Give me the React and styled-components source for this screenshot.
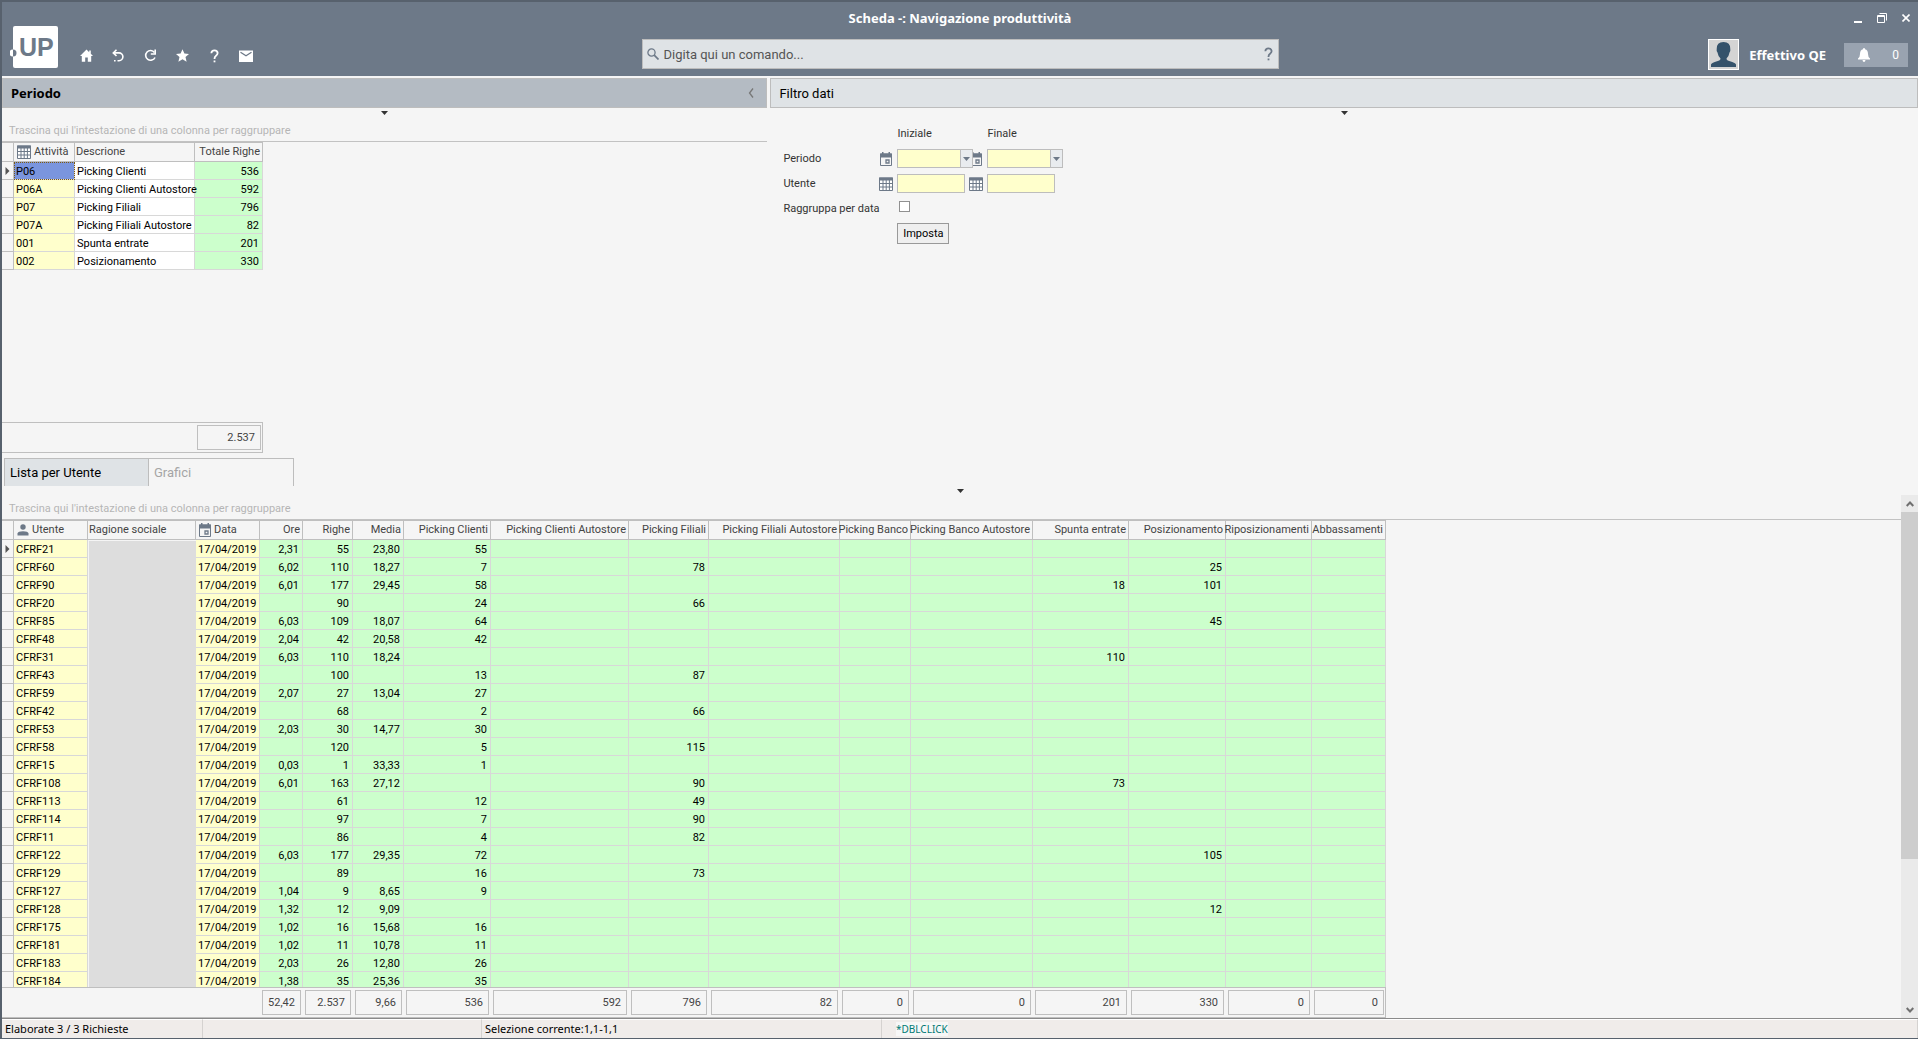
import React, { useState } from "react";
import styled, { createGlobalStyle, css } from "styled-components";

const GlobalStyle = createGlobalStyle`
  * { box-sizing: border-box; }
  body {
    margin: 0;
    background: #f5f5f5;
    color: #333;
    font-family: Roboto, sans-serif;
    font-size: 11px;
  }
  button, input {
    font: inherit;
    color: inherit;
    margin: 0;
    padding: 0;
    border: 0;
    border-radius: 0;
    background: none;
  }
`;

const Window = styled.div`
  display: flex;
  flex-direction: column;
  height: 100vh;
  border-top: 2px solid #57616d;
  border-left: 2px solid #57616d;
  border-bottom: 1px solid #57616d;
  overflow: hidden;
`;

/* Cabeçalho */
const Header = styled.header`
  display: grid;
  grid-template-columns: 1fr minmax(300px, 637px) 1fr;
  flex: none;
  height: 74px;
  background: #6d7988;
  color: #fff;
`;
const HeaderLeft = styled.div`
  display: flex;
  align-items: flex-end;
  padding: 0 0 8px 8px;
`;
const Logo = styled.svg`
  display: block;
  width: 48px;
  height: 42px;
  margin-right: 12px;
`;
const Toolbar = styled.nav`
  display: flex;
`;
const ToolButton = styled.button`
  display: flex;
  align-items: center;
  justify-content: center;
  width: 32px;
  height: 25px;
`;
const HeaderCenter = styled.div`
  display: flex;
  flex-direction: column;
`;
const Title = styled.h1`
  margin: 0;
  height: 37px;
  line-height: 33px;
  font-family: "Noto Sans", sans-serif;
  font-size: 13px;
  text-align: center;
`;
const Search = styled.label`
  display: flex;
  align-items: center;
  height: 30px;
  padding: 0 5px 0 4px;
  gap: 5px;
  background: #dfe3e6;
  border: 1px solid #bdbdbd;
  color: #6d7988;
`;
const SearchInput = styled.input`
  flex: 1;
  min-width: 0;
  height: 26px;
  font-size: 13px;
  outline: 0;
  &::placeholder { color: #555; opacity: 1; }
`;
const HeaderRight = styled.div`
  display: flex;
  flex-direction: column;
  align-items: flex-end;
`;
const WindowButtons = styled.div`
  display: flex;
  height: 37px;
  padding: 8px 0 0;
`;
const WindowButton = styled.button`
  display: flex;
  align-items: center;
  justify-content: center;
  width: 24px;
  height: 16px;
`;
const UserArea = styled.div`
  display: flex;
  align-items: center;
  height: 31px;
  padding-right: 10px;
`;
const UserName = styled.span`
  margin: 0 18px 0 10px;
  font-family: "Noto Sans", sans-serif;
  font-size: 13px;
  font-weight: bold;
`;
const Bell = styled.button`
  display: flex;
  align-items: center;
  justify-content: space-between;
  width: 64px;
  height: 24px;
  padding: 0 9px 0 14px;
  background: #99a3b0;
  font-size: 12px;
`;

/* Painéis superiores */
const Upper = styled.div`
  display: grid;
  grid-template-columns: calc(40% - 1px) 1fr;
  column-gap: 3px;
  flex: none;
  padding-top: 2px;
`;
const Panel = styled.section`
  display: flex;
  flex-direction: column;
  min-width: 0;
`;
const PanelHeader = styled.h2`
  display: flex;
  align-items: center;
  justify-content: space-between;
  margin: 0;
  height: 30px;
  padding: 0 10px 0 8px;
  border: 1px solid #bdbdbd;
  background: ${({ $active }) => ($active ? "#b4bbc3" : "#dfe3e6")};
  color: #000;
  font-family: ${({ $active }) => ($active ? '"Noto Sans"' : "Roboto")}, sans-serif;
  font-size: 13px;
  font-weight: ${({ $active }) => ($active ? "bold" : "normal")};
`;
const PanelButton = styled.button`
  display: flex;
  color: #777;
`;
const Splitter = styled.div`
  display: flex;
  justify-content: center;
  align-items: center;
  flex: none;
  height: 9px;
`;
const GroupHint = styled.div`
  flex: none;
  height: 25px;
  padding: 3px 0 0 7px;
  line-height: 21px;
  border-bottom: 1px solid #c2c2c2;
  color: #b5b5b5;
`;

/* Grades */
const GridBody = styled.div`
  flex: ${({ $fill }) => ($fill ? "1" : "none")};
  min-height: 0;
  height: ${({ $fill }) => ($fill ? "auto" : "280px")};
  overflow: hidden;
`;
const Table = styled.table`
  table-layout: fixed;
  width: 0;
  border-spacing: 0;
`;
const Col = styled.col`
  width: ${({ $w }) => $w}px;
`;
const Th = styled.th`
  height: 20px;
  padding: 0 2px 0 1px;
  border: solid #bfbfbf;
  border-width: 1px 1px 1px 0;
  font-weight: normal;
  line-height: 16px;
  text-align: ${({ $right }) => ($right ? "right" : "left")};
  white-space: nowrap;
  color: #444;
`;
const ThLabel = styled.span`
  display: flex;
  align-items: center;
  justify-content: ${({ $right }) => ($right ? "flex-end" : "flex-start")};
  gap: 3px;
  padding-left: ${({ $icon }) => ($icon ? "2px" : "0")};
`;
const fills = {
  key: "#ffffcc",
  text: "#ffffff",
  num: "#ccffcc",
  mark: "#f5f5f5",
};
const Td = styled.td`
  height: 18px;
  padding: 3px 3px 0 2px;
  border: solid #d8d8d8;
  border-width: 0 1px 1px 0;
  background: ${({ $fill }) => fills[$fill]};
  color: #000;
  line-height: 14px;
  text-align: ${({ $fill }) => ($fill === "num" ? "right" : "left")};
  white-space: nowrap;
  ${({ $fill }) => $fill === "mark" && css`
    padding: 0 0 0 3px;
    border-color: #bfbfbf;
    line-height: 0;
  `}
  ${({ $selected }) => $selected && css`
    background: #7a95de;
    outline: 1px dotted #7d5a10;
    outline-offset: -1px;
  `}
`;
const Masked = styled.td`
  padding: 0;
  border-left: 1px solid #f5f5f5;
  border-top: 1px solid #f5f5f5;
  background: #dddddd;
`;
const Footer = styled.div`
  flex: none;
  display: flex;
  width: ${({ $w }) => $w}px;
  height: 31px;
  border: solid #bfbfbf;
  border-width: 1px 1px 1px 0;
`;
const FootCell = styled.div`
  flex: 0 0 ${({ $w }) => $w}px;
  padding: 2px;
`;
const Total = styled.output`
  display: block;
  height: 25px;
  padding-right: 5px;
  border: 1px solid #bfbfbf;
  line-height: 24px;
  text-align: right;
  color: #444;
`;

/* Filtros */
const Filters = styled.form`
  display: grid;
  grid-template-columns: 96px 18px 68px 22px 76px;
  grid-auto-rows: 25px;
  align-items: center;
  padding: 4px 0 0 13px;
  line-height: 15px;
  white-space: nowrap;
`;
const FieldIcon = styled.span`
  display: flex;
  justify-content: center;
  justify-self: end;
  width: 14px;
  margin-right: 4px;
`;
const Combo = styled.div`
  position: relative;
  z-index: 1;
  display: flex;
  width: 76px;
  height: 19px;
  border: 1px solid #bdbdbd;
`;
const ComboInput = styled.input`
  flex: 1;
  min-width: 0;
  padding: 0 2px;
  background: #ffffcc;
`;
const ComboButton = styled.button`
  display: flex;
  align-items: center;
  justify-content: center;
  width: 12px;
  border-left: 1px solid #bdbdbd;
  background: #e9ecef;
`;
const TextInput = styled.input`
  width: 68px;
  height: 19px;
  padding: 0 2px;
  border: 1px solid #bdbdbd;
  background: #ffffcc;
`;
const CheckBox = styled.input`
  appearance: none;
  width: 11px;
  height: 11px;
  margin: 0 0 4px 2px;
  border: 1px solid #909090;
  background: #fff;
  &:checked { background: #6d7988; }
`;
const SubmitButton = styled.button`
  width: 52px;
  height: 21px;
  border: 1px solid #999;
  background: #efefef;
  color: #000;
`;

/* Abas e parte inferior */
const Tabs = styled.div`
  display: flex;
  flex: none;
  margin: 5px 0 0 2px;
  height: 28px;
`;
const Tab = styled.button`
  width: 145px;
  padding-left: 5px;
  border: solid #bdbdbd;
  border-width: 1px 1px 0 ${({ $active }) => ($active ? "1px" : "0")};
  background: ${({ $active }) => ($active ? "#dfe3e6" : "transparent")};
  color: ${({ $active }) => ($active ? "#000" : "#a5a5a5")};
  font-size: 13px;
  text-align: left;
`;
const Lower = styled.div`
  display: flex;
  flex: 1;
  min-height: 0;
`;
const LowerGrid = styled.div`
  display: flex;
  flex-direction: column;
  flex: 1;
  min-width: 0;
`;
const ScrollBar = styled.div`
  display: flex;
  flex-direction: column;
  width: 17px;
  background: #eaeaea;
`;
const ScrollButton = styled.button`
  display: flex;
  align-items: center;
  justify-content: center;
  flex: none;
  height: 17px;
`;
const ScrollTrack = styled.div`
  flex: 1;
`;
const ScrollThumb = styled.div`
  height: 71%;
  background: #cdcdcd;
`;
const StatusBar = styled.footer`
  display: grid;
  grid-template-columns: 201px 279px 400px 1fr;
  flex: none;
  height: 20px;
  border-top: 1px solid #8a8a8a;
  background: #f0ecea;
  color: #000;
  font-family: "Noto Sans", sans-serif;
`;
const StatusItem = styled.span`
  padding-left: ${({ $event }) => ($event ? "14px" : "3px")};
  border-right: 1px solid #d5d2d0;
  border-top: 1px solid #fff;
  line-height: 17px;
  white-space: nowrap;
`;
const EventText = styled.span`
  background: #f7f7f7;
  color: #007a74;
  font-size: 10px;
`;

/* Ícones */
const ArrowDown = () => (
  <svg width="7" height="4" viewBox="0 0 7 4"><path d="M0 0h7L3.5 4z" fill="#333" /></svg>
);
const RowMarker = () => (
  <svg width="5" height="8" viewBox="0 0 5 8"><path d="M0.500 0L4.500 4L0.500 8z" fill="#555" /></svg>
);
const GridIcon = () => (
  <svg width="14" height="14" viewBox="0 0 14 14">
    <path d="M0.500 1h13v12.500H0.500z" fill="#fff" stroke="#6d7988" />
    <path d="M0 0.500h14v3H0z" fill="#6d7988" />
    <path d="M0 6.500h14M0 10h14M4 3v11M7.200 3v11M10.400 3v11" stroke="#6d7988" />
  </svg>
);
const CalendarIcon = () => (
  <svg width="12" height="14" viewBox="0 0 12 14">
    <path d="M0.500 2h11v11.500H0.500z" fill="#f5f5f5" stroke="#6d7988" />
    <path d="M0 1.500h12v4H0zM2 0h1.500v2H2zM8.500 0H10v2H8.500z" fill="#6d7988" />
    <path d="M6 8h3v3H6z" fill="none" stroke="#6d7988" strokeWidth="1.300" />
  </svg>
);
const UserIcon = () => (
  <svg width="12" height="12" viewBox="0 0 12 12" fill="#6d7988">
    <circle cx="6" cy="3" r="2.700" />
    <path d="M0.500 11.500V9.500Q1 7.200 6 7.200T11.500 9.500v2z" />
  </svg>
);
const Question = ({ size = 15 }) => (
  <svg width={size - 5} height={size} viewBox="0 0 10 15" fill="none" stroke="currentColor" strokeWidth="2">
    <path d="M1.500 4.500Q1.700 1.300 5 1.300T8.500 4.300Q8.500 5.900 6.700 7.100T5 10.800" />
    <path d="M5 12.500v2" />
  </svg>
);

const tools = [
  ["Home", <svg width="13" height="13" viewBox="0 0 13 13" fill="#fff"><path d="M6.500 0.500L0 7h1.800v5.800h3.400V8.500h2.600v4.300h3.400V7H13L10.800 4.800V1.500H9.200v1.700z" /></svg>],
  ["Indietro", <svg width="12" height="13" viewBox="0 0 12 13" fill="none" stroke="#fff" strokeWidth="1.600"><path d="M4.500 0.800L1.300 3.900L4.500 7M1.500 3.900H7a3.800 3.800 0 0 1 0 7.800H5.500" /><path d="M2 11.700h1.600" /></svg>],
  ["Aggiorna", <svg width="13" height="13" viewBox="0 0 13 13" fill="none" stroke="#fff" strokeWidth="1.600"><path d="M10.500 3.400A4.900 4.900 0 1 0 11 8.500" /><path d="M11.200 0.500V5H6.800" /></svg>],
  ["Preferiti", <svg width="13" height="13" viewBox="0 0 13 13" fill="#fff"><path d="M6.500 0.300L8.400 4.600L13 5L9.500 8.100L10.600 12.700L6.500 10.200L2.400 12.700L3.500 8.100L0 5L4.600 4.600z" /></svg>],
  ["Aiuto", <Question size={14} />],
  ["Messaggi", <svg width="14" height="12" viewBox="0 0 14 12"><path d="M0 0.500h14v11.500H0z" fill="#fff" /><path d="M1.500 2.200L7 5.800L12.500 2.200" fill="none" stroke="#6d7988" strokeWidth="1.300" /></svg>],
];

const activityCols = [
  { label: "", w: 12, fill: "mark" },
  { label: "Attività", w: 61, fill: "key", icon: <GridIcon /> },
  { label: "Descrione", w: 120, fill: "text" },
  { label: "Totale Righe", w: 68, fill: "num" },
];
const activities = [
  ["P06", "Picking Clienti", "536"],
  ["P06A", "Picking Clienti Autostore", "592"],
  ["P07", "Picking Filiali", "796"],
  ["P07A", "Picking Filiali Autostore", "82"],
  ["001", "Spunta entrate", "201"],
  ["002", "Posizionamento", "330"],
];

const userCols = [
  { label: "", w: 12, fill: "mark" },
  { label: "Utente", w: 74, fill: "key", icon: <UserIcon /> },
  { label: "Ragione sociale", w: 108, fill: "masked" },
  { label: "Data", w: 64, fill: "key", icon: <CalendarIcon /> },
  { label: "Ore", w: 43, fill: "num", total: "52,42" },
  { label: "Righe", w: 50, fill: "num", total: "2.537" },
  { label: "Media", w: 51, fill: "num", total: "9,66" },
  { label: "Picking Clienti", w: 87, fill: "num", total: "536" },
  { label: "Picking Clienti Autostore", w: 138, fill: "num", total: "592" },
  { label: "Picking Filiali", w: 80, fill: "num", total: "796" },
  { label: "Picking Filiali Autostore", w: 131, fill: "num", total: "82" },
  { label: "Picking Banco", w: 71, fill: "num", total: "0" },
  { label: "Picking Banco Autostore", w: 122, fill: "num", total: "0" },
  { label: "Spunta entrate", w: 96, fill: "num", total: "201" },
  { label: "Posizionamento", w: 97, fill: "num", total: "330" },
  { label: "Riposizionamenti", w: 86, fill: "num", total: "0" },
  { label: "Abbassamenti", w: 74, fill: "num", total: "0" },
];

// utente, ore, righe, media, picking clienti, picking filiali, spunta entrate, posizionamento
const users = [
  ["CFRF21", "2,31", "55", "23,80", "55", "", "", ""],
  ["CFRF60", "6,02", "110", "18,27", "7", "78", "", "25"],
  ["CFRF90", "6,01", "177", "29,45", "58", "", "18", "101"],
  ["CFRF20", "", "90", "", "24", "66", "", ""],
  ["CFRF85", "6,03", "109", "18,07", "64", "", "", "45"],
  ["CFRF48", "2,04", "42", "20,58", "42", "", "", ""],
  ["CFRF31", "6,03", "110", "18,24", "", "", "110", ""],
  ["CFRF43", "", "100", "", "13", "87", "", ""],
  ["CFRF59", "2,07", "27", "13,04", "27", "", "", ""],
  ["CFRF42", "", "68", "", "2", "66", "", ""],
  ["CFRF53", "2,03", "30", "14,77", "30", "", "", ""],
  ["CFRF58", "", "120", "", "5", "115", "", ""],
  ["CFRF15", "0,03", "1", "33,33", "1", "", "", ""],
  ["CFRF108", "6,01", "163", "27,12", "", "90", "73", ""],
  ["CFRF113", "", "61", "", "12", "49", "", ""],
  ["CFRF114", "", "97", "", "7", "90", "", ""],
  ["CFRF11", "", "86", "", "4", "82", "", ""],
  ["CFRF122", "6,03", "177", "29,35", "72", "", "", "105"],
  ["CFRF129", "", "89", "", "16", "73", "", ""],
  ["CFRF127", "1,04", "9", "8,65", "9", "", "", ""],
  ["CFRF128", "1,32", "12", "9,09", "", "", "", "12"],
  ["CFRF175", "1,02", "16", "15,68", "16", "", "", ""],
  ["CFRF181", "1,02", "11", "10,78", "11", "", "", ""],
  ["CFRF183", "2,03", "26", "12,80", "26", "", "", ""],
  ["CFRF184", "1,38", "35", "25,36", "35", "", "", ""],
];
const userRows = users.map(([id, ore, righe, media, clienti, filiali, spunta, posiz]) => [
  id, null, "17/04/2019", ore, righe, media, clienti, "", filiali, "", "", "", spunta, posiz, "", "",
]);

const sumWidths = (cols) => cols.reduce((sum, c) => sum + c.w, 0);

const DataGrid = ({ cols, rows, fill, selectFirst }) => (
  <GridBody $fill={fill}>
    <Table>
      <colgroup>
        {cols.map((c, i) => <Col key={i} $w={c.w} />)}
      </colgroup>
      <thead>
        <tr>
          {cols.map((c, i) => (
            <Th key={i} $right={c.fill === "num"}>
              <ThLabel $right={c.fill === "num"} $icon={!!c.icon}>{c.icon}{c.label}</ThLabel>
            </Th>
          ))}
        </tr>
      </thead>
      <tbody>
        {rows.map((row, r) => (
          <tr key={r}>
            <Td $fill="mark">{r === 0 && <RowMarker />}</Td>
            {row.map((value, i) => {
              const col = cols[i + 1];
              if (col.fill === "masked") {
                return r === 0 ? <Masked key={i} rowSpan={rows.length} /> : null;
              }
              return (
                <Td key={i} $fill={col.fill} $selected={selectFirst && r === 0 && i === 0}>{value}</Td>
              );
            })}
          </tr>
        ))}
      </tbody>
    </Table>
  </GridBody>
);

const DateCombo = ({ id, label }) => (
  <Combo>
    <ComboInput id={id} aria-label={label} />
    <ComboButton type="button" aria-label={`Apri ${label}`}>
      <svg width="7" height="4" viewBox="0 0 7 4"><path d="M0 0h7L3.500 4z" fill="#6d7988" /></svg>
    </ComboButton>
  </Combo>
);

const TopBar = () => (
  <Header>
    <HeaderLeft>
      <Logo viewBox="0 0 48 42">
        <rect x="3" y="0" width="45" height="42" rx="2" fill="#fff" />
        <circle cx="3" cy="27" r="3.500" fill="#6d7988" />
        <path d="M3 23.500a3.500 3.500 0 0 0 0 7z" fill="#fff" />
        <text x="9" y="30" fill="#6d7988" fontFamily="Liberation Sans, sans-serif" fontSize="25" fontWeight="bold">UP</text>
      </Logo>
      <Toolbar>
        {tools.map(([name, icon]) => (
          <ToolButton key={name} type="button" aria-label={name}>{icon}</ToolButton>
        ))}
      </Toolbar>
    </HeaderLeft>
    <HeaderCenter>
      <Title>Scheda -: Navigazione produttività</Title>
      <Search>
        <svg width="12" height="12" viewBox="0 0 12 12" fill="none" stroke="currentColor" strokeWidth="1.300">
          <circle cx="4.500" cy="4.500" r="3.600" />
          <path d="M7.200 7.200L11.500 11.500" strokeWidth="1.700" />
        </svg>
        <SearchInput aria-label="Comando" placeholder="Digita qui un comando..." />
        <Question size={14} />
      </Search>
    </HeaderCenter>
    <HeaderRight>
      <WindowButtons>
        <WindowButton type="button" aria-label="Riduci">
          <svg width="8" height="10" viewBox="0 0 8 10"><path d="M0 8h8v2H0z" fill="#fff" /></svg>
        </WindowButton>
        <WindowButton type="button" aria-label="Ripristina">
          <svg width="10" height="10" viewBox="0 0 10 10" fill="none" stroke="#fff">
            <path d="M0.500 2.500h7v7h-7zM0 3.500h8M2.500 0.500h7v7" />
          </svg>
        </WindowButton>
        <WindowButton type="button" aria-label="Chiudi">
          <svg width="8" height="8" viewBox="0 0 8 8"><path d="M0.500 0.500l7 7M7.500 0.500l-7 7" stroke="#fff" strokeWidth="1.600" /></svg>
        </WindowButton>
      </WindowButtons>
      <UserArea>
        <svg width="31" height="31" viewBox="0 0 31 31">
          <rect x="0.500" y="0.500" width="30" height="30" fill="#d4d4d4" stroke="#fff" />
          <path d="M3 28v-2.500Q4 23.500 9 22.300Q12.500 21.500 12.500 19.500Q10 17 9.500 13.500Q8.300 12 8.700 10Q8.500 3 15.500 3T22.300 10Q22.700 12 21.500 13.500Q21 17 18.500 19.500Q18.500 21.500 22 22.300Q27 23.500 28 25.500V28z" fill="#34526b" />
        </svg>
        <UserName>Effettivo QE</UserName>
        <Bell type="button" aria-label="Notifiche 0">
          <svg width="12" height="14" viewBox="0 0 12 14" fill="#fff">
            <path d="M6 0Q7 0 7 1.200Q10 2 10 6Q10 9 12 10.500V11.500H0V10.500Q2 9 2 6Q2 2 5 1.200Q5 0 6 0zM4.500 12h3Q7.300 14 6 14T4.500 12z" />
          </svg>
          0
        </Bell>
      </UserArea>
    </HeaderRight>
  </Header>
);

const FilterForm = () => {
  const [grouped, setGrouped] = useState(false);

  return (
    <Filters onSubmit={(e) => e.preventDefault()}>
      <span /><span /><span>Iniziale</span><span /><span>Finale</span>

      <label htmlFor="periodo">Periodo</label>
      <FieldIcon><CalendarIcon /></FieldIcon>
      <DateCombo id="periodo" label="Periodo iniziale" />
      <FieldIcon><CalendarIcon /></FieldIcon>
      <DateCombo id="periodo-fine" label="Periodo finale" />

      <label htmlFor="utente">Utente</label>
      <FieldIcon><GridIcon /></FieldIcon>
      <TextInput id="utente" />
      <FieldIcon><GridIcon /></FieldIcon>
      <TextInput aria-label="Utente finale" />

      <label htmlFor="raggruppa">Raggruppa per data</label>
      <span />
      <CheckBox id="raggruppa" type="checkbox" checked={grouped} onChange={() => setGrouped(!grouped)} />
      <span /><span />

      <span /><span />
      <SubmitButton type="submit">Imposta</SubmitButton>
    </Filters>
  );
};

const App = () => {
  return (
    <Window>
      <GlobalStyle />
      <TopBar />
      <Upper>
        <Panel>
          <PanelHeader $active>
            Periodo
            <PanelButton type="button" aria-label="Comprimi">
              <svg width="8" height="10" viewBox="0 0 8 10" fill="none" stroke="currentColor" strokeWidth="1.300"><path d="M5 0.500L1.500 5L5 9.500" /></svg>
            </PanelButton>
          </PanelHeader>
          <Splitter><ArrowDown /></Splitter>
          <GroupHint>Trascina qui l'intestazione di una colonna per raggruppare</GroupHint>
          <DataGrid cols={activityCols} rows={activities} selectFirst />
          <Footer $w={sumWidths(activityCols)}>
            <FootCell $w={193} />
            <FootCell $w={68}><Total>2.537</Total></FootCell>
          </Footer>
        </Panel>
        <Panel>
          <PanelHeader>Filtro dati</PanelHeader>
          <Splitter><ArrowDown /></Splitter>
          <FilterForm />
        </Panel>
      </Upper>

      <Tabs>
        <Tab type="button" $active>Lista per Utente</Tab>
        <Tab type="button">Grafici</Tab>
      </Tabs>
      <Splitter><ArrowDown /></Splitter>
      <Lower>
        <LowerGrid>
          <GroupHint>Trascina qui l'intestazione di una colonna per raggruppare</GroupHint>
          <DataGrid cols={userCols} rows={userRows} fill />
          <Footer $w={sumWidths(userCols)}>
            {userCols.map((c, i) => (
              <FootCell key={i} $w={c.w}>{c.total && <Total>{c.total}</Total>}</FootCell>
            ))}
          </Footer>
        </LowerGrid>
        <ScrollBar>
          <ScrollButton type="button" aria-label="Su">
            <svg width="8" height="6" viewBox="0 0 8 6" fill="none" stroke="#707070" strokeWidth="2"><path d="M0.700 5L4 1.500L7.300 5" /></svg>
          </ScrollButton>
          <ScrollTrack><ScrollThumb /></ScrollTrack>
          <ScrollButton type="button" aria-label="Giù">
            <svg width="8" height="6" viewBox="0 0 8 6" fill="none" stroke="#707070" strokeWidth="2"><path d="M0.700 1L4 4.500L7.300 1" /></svg>
          </ScrollButton>
        </ScrollBar>
      </Lower>
      <StatusBar>
        <StatusItem>Elaborate 3 / 3 Richieste</StatusItem>
        <StatusItem />
        <StatusItem>Selezione corrente:1,1-1,1</StatusItem>
        <StatusItem $event><EventText>*DBLCLICK</EventText></StatusItem>
      </StatusBar>
    </Window>
  );
};

export default App;
